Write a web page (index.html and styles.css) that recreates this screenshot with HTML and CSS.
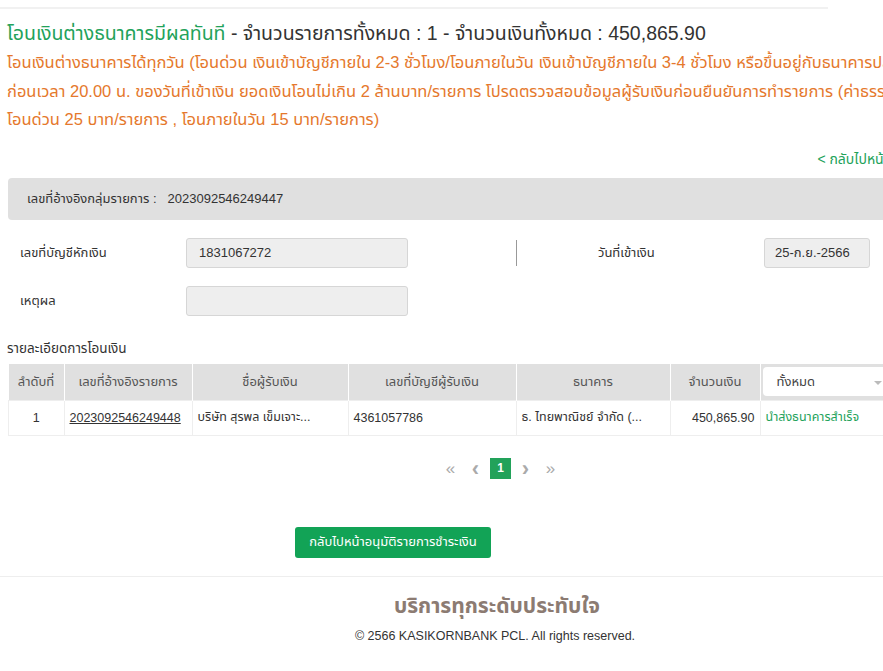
FILE: index.html
```html
<!DOCTYPE html>
<html lang="th">
<head>
    <meta charset="UTF-8">
    <meta name="viewport" content="width=device-width, initial-scale=1.0">
    <title>โอนเงินต่างธนาคาร</title>
    <link rel="stylesheet" href="styles.css">
</head>
<body>
    <div class="page">
        <div class="top-line"></div>

        <div class="content">
            <h1 class="title">
                <span class="title-green">โอนเงินต่างธนาคารมีผลทันที</span> - จำนวนรายการทั้งหมด : 1 - จำนวนเงินทั้งหมด : 450,865.90
            </h1>
            <p class="notice">
                โอนเงินต่างธนาคารได้ทุกวัน (โอนด่วน เงินเข้าบัญชีภายใน 2-3 ชั่วโมง/โอนภายในวัน เงินเข้าบัญชีภายใน 3-4 ชั่วโมง หรือขึ้นอยู่กับธนาคารปลายทาง) ทำรายการได้<br>
                ก่อนเวลา 20.00 น. ของวันที่เข้าเงิน ยอดเงินโอนไม่เกิน 2 ล้านบาท/รายการ โปรดตรวจสอบข้อมูลผู้รับเงินก่อนยืนยันการทำรายการ (ค่าธรรมเนียม<br>
                โอนด่วน 25 บาท/รายการ , โอนภายในวัน 15 บาท/รายการ)
            </p>

            <div class="back-row">
                <a class="back-link" href="#">&lt; กลับไปหน้าหลัก</a>
            </div>

            <div class="ref-bar">
                <span class="ref-label">เลขที่อ้างอิงกลุ่มรายการ :</span>
                <span class="ref-value">2023092546249447</span>
            </div>

            <div class="field-row">
                <label class="field-label">เลขที่บัญชีหักเงิน</label>
                <div class="field-box">1831067272</div>
                <div class="divider"></div>
                <label class="field-label date-label">วันที่เข้าเงิน</label>
                <div class="field-box date-box">25-ก.ย.-2566</div>
            </div>

            <div class="field-row">
                <label class="field-label">เหตุผล</label>
                <div class="field-box"></div>
            </div>

            <div class="section-head">
                <span>รายละเอียดการโอนเงิน</span>
                <span class="section-extra">(ทั้งหมด 1 รายการ)</span>
            </div>

            <table class="transfer-table">
                <thead>
                    <tr>
                        <th class="col-no">ลำดับที่</th>
                        <th class="col-ref">เลขที่อ้างอิงรายการ</th>
                        <th class="col-name">ชื่อผู้รับเงิน</th>
                        <th class="col-acc">เลขที่บัญชีผู้รับเงิน</th>
                        <th class="col-bank">ธนาคาร</th>
                        <th class="col-amt">จำนวนเงิน</th>
                        <th class="col-status">
                            <div class="status-select">
                                <span>ทั้งหมด</span>
                                <span class="caret"></span>
                            </div>
                        </th>
                    </tr>
                </thead>
                <tbody>
                    <tr>
                        <td class="center">1</td>
                        <td><a class="ref-link" href="#">2023092546249448</a></td>
                        <td>บริษัท สุรพล เข็มเจาะ...</td>
                        <td>4361057786</td>
                        <td>ธ. ไทยพาณิชย์ จำกัด (...</td>
                        <td class="right">450,865.90</td>
                        <td class="status-ok">นำส่งธนาคารสำเร็จ</td>
                    </tr>
                </tbody>
            </table>

            <div class="pager">
                <span class="pager-arrow">&laquo;</span>
                <span class="pager-arrow bold">&lsaquo;</span>
                <span class="pager-current">1</span>
                <span class="pager-arrow bold">&rsaquo;</span>
                <span class="pager-arrow">&raquo;</span>
            </div>

            <div class="actions">
                <button class="btn-green">กลับไปหน้าอนุมัติรายการชำระเงิน</button>
            </div>
        </div>

        <div class="footer">
            <div class="footer-slogan">บริการทุกระดับประทับใจ</div>
            <div class="footer-copy">&copy; 2566 KASIKORNBANK PCL. All rights reserved.</div>
        </div>
    </div>
</body>
</html>
```

FILE: styles.css
```css
:root {
    --green: #22a25a;
    --orange: #e5782c;
    --grey-bar: #e0e0e0;
    --text: #333;
}

html, body {
    margin: 0;
    padding: 0;
    overflow: hidden;
    background: #fff;
}

body {
    font-family: "Liberation Sans", "Noto Sans Thai", "Noto Sans", sans-serif;
    color: var(--text);
    font-size: 13px;
}

.page {
    width: 990px;
}

.top-line {
    width: 828px;
    height: 2px;
    margin-top: 7px;
    background: #f1f1f1;
}

.content {
    padding-left: 7px;
}

.title {
    margin: 11px 0 0;
    font-size: 19.5px;
    font-weight: normal;
    line-height: 26px;
    white-space: nowrap;
}

.title-green {
    color: var(--green);
}

.notice {
    margin: 2px 0 0;
    color: var(--orange);
    font-size: 16.5px;
    line-height: 28.5px;
    white-space: nowrap;
}

.back-row {
    display: flex;
    justify-content: flex-end;
    margin-top: 15px;
    line-height: 20px;
    padding-right: 76px;
}

.back-link {
    color: var(--green);
    text-decoration: none;
    font-size: 14px;
}

.ref-bar {
    margin: 9px 0 0 1px;
    height: 42px;
    display: flex;
    align-items: center;
    gap: 11px;
    padding-left: 19px;
    background: var(--grey-bar);
    border-radius: 4px 0 0 4px;
    font-size: 13px;
}

.field-row {
    display: flex;
    align-items: center;
    margin-top: 18px;
    padding-left: 13px;
}

.field-label {
    width: 166px;
    font-size: 13px;
}

.field-box {
    box-sizing: border-box;
    width: 222px;
    height: 30px;
    padding: 0 12px;
    line-height: 28px;
    background: #eee;
    border: 1px solid #d6d6d6;
    border-radius: 3px;
}

.divider {
    width: 1px;
    height: 26px;
    margin-left: 108px;
    background: #999;
}

.date-label {
    width: 166px;
    padding-left: 81px;
}

.date-box {
    width: 106px;
    padding: 0 10px;
}

.section-head {
    display: flex;
    justify-content: space-between;
    margin-top: 23px;
    line-height: 20px;
    width: 1000px;
    font-size: 13.5px;
}

.transfer-table {
    margin: 5px 0 0 1px;
    border-collapse: collapse;
    table-layout: fixed;
    width: 975px;
}

.transfer-table th {
    height: 36px;
    padding: 0;
    background: var(--grey-bar);
    color: #555;
    font-weight: normal;
    border-left: 1px solid #fff;
    text-align: center;
}

.transfer-table th:first-child {
    border-left: none;
}

.transfer-table td {
    height: 34px;
    padding: 0 5px;
    border: 1px solid #eee;
    white-space: nowrap;
    overflow: hidden;
    font-size: 12.5px;
}

.col-no { width: 55px; }
.col-ref { width: 127px; }
.col-name { width: 155px; }
.col-acc { width: 167px; }
.col-bank { width: 153px; }
.col-amt { width: 89px; }

.transfer-table th.col-status {
    text-align: left;
    padding-left: 2px;
}

.status-select {
    box-sizing: border-box;
    width: 127px;
    height: 29px;
    display: flex;
    align-items: center;
    justify-content: space-between;
    padding: 0 8px 0 14px;
    background: #fff;
    border-radius: 4px;
    color: #444;
}

.caret {
    width: 0;
    height: 0;
    border-left: 4px solid transparent;
    border-right: 4px solid transparent;
    border-top: 4px solid #bbb;
    margin-top: 3px;
}

.center { text-align: center; }
.right { text-align: right; }

.ref-link {
    color: var(--text);
}

.status-ok {
    color: var(--green);
}

.pager {
    display: flex;
    align-items: center;
    justify-content: center;
    margin-top: 22px;
    padding-left: 10px;
    width: 967px;
}

.pager-arrow {
    width: 25px;
    text-align: center;
    color: #aaa;
    font-size: 17px;
    line-height: 21px;
}

.pager-arrow.bold {
    font-size: 22px;
    font-weight: bold;
}

.pager-current {
    width: 21px;
    height: 21px;
    margin: 0 2px;
    line-height: 21px;
    text-align: center;
    background: var(--green);
    color: #fff;
    font-size: 12px;
    font-weight: bold;
}

.actions {
    margin-top: 48px;
    padding-left: 288px;
}

.btn-green {
    height: 31px;
    width: 196px;
    padding: 0;
    border: none;
    border-radius: 3px;
    background: #12a356;
    color: #fff;
    font-family: inherit;
    font-size: 13px;
}

.footer {
    margin-top: 18px;
    border-top: 1px solid #eee;
    text-align: center;
}

.footer-slogan {
    margin-top: 14px;
    padding-left: 4px;
    font-size: 21px;
    font-weight: bold;
    line-height: 30px;
    color: #8c7b72;
}

.footer-copy {
    margin-top: 6px;
    font-size: 12.5px;
    line-height: 18px;
}
```
